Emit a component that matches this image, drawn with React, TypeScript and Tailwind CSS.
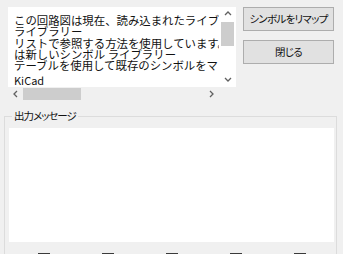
import React from "react";

function Chevron({ dir }: { dir: "up" | "down" | "left" | "right" }) {
  const d =
    dir === "up"
      ? "M1 5 L4 2 L7 5"
      : dir === "down"
      ? "M1 2 L4 5 L7 2"
      : dir === "left"
      ? "M5 1 L2 4 L5 7"
      : "M2 1 L5 4 L2 7";
  return (
    <svg width="8" height="8" viewBox="0 0 8 8" className="block">
      <path d={d} fill="none" stroke="#606060" strokeWidth="1.3" />
    </svg>
  );
}

export default function App() {
  const lines = [
    "この回路図は現在、読み込まれたライブラリー",
    "ライブラリー",
    "リストで参照する方法を使用しています。",
    "は新しいシンボル ライブラリー",
    "テーブルを使用して既存のシンボルをマップ",
  ];
  return (
    <div className="w-[343px] h-[254px] overflow-hidden bg-[#f0f0f0] text-[#111] text-[11px] [font-family:'Noto_Sans_CJK_JP',sans-serif]">
      <div className="flex pt-[7px] pl-[8px]">
        <div className="w-[228px] flex flex-col">
          <div className="h-[80px] bg-white flex">
            <div className="w-[211px] overflow-hidden pl-[6px] pt-[8px] whitespace-nowrap text-[11.4px] leading-[11.3px]">
              {lines.map((l, i) => (
                <div key={i}>{l}</div>
              ))}
              <div className="mt-[4px] text-[11px]">KiCad</div>
            </div>
            <div className="w-[17px] flex flex-col items-center">
              <div className="h-[13px] flex items-center justify-center pt-[1px]">
                <Chevron dir="up" />
              </div>
              <div className="mt-[2px] w-[13px] h-[24px] bg-[#cdcdcd]" />
              <div className="flex-1" />
              <div className="h-[14px] flex items-center justify-center">
                <Chevron dir="down" />
              </div>
            </div>
          </div>
          <div className="h-[13px] flex items-center w-[211px]">
            <div className="w-[15px] flex justify-center">
              <Chevron dir="left" />
            </div>
            <div className="w-[58px] h-[12px] bg-[#cdcdcd]" />
            <div className="flex-1" />
            <div className="w-[15px] flex justify-center">
              <Chevron dir="right" />
            </div>
          </div>
        </div>
        <div className="ml-[7px] flex flex-col gap-[9px]">
          <button className="w-[91px] h-[24px] bg-[#e1e1e1] border border-[#adadad] text-[10.5px] tracking-[-0.7px] [font-feature-settings:'palt'] text-[#111] flex items-center justify-center leading-none">
            シンボルをリマップ
          </button>
          <button className="w-[91px] h-[24px] bg-[#e1e1e1] border border-[#adadad] text-[10.5px] tracking-[-0.7px] [font-feature-settings:'palt'] text-[#111] flex items-center justify-center leading-none">
            閉じる
          </button>
        </div>
      </div>
      <fieldset className="ml-[4px] mt-[8px] w-[333px] border border-[#dcdcdc] pl-[4px] pr-[2px] pb-[4px]">
        <legend className="ml-[3px] px-[2px] text-[10.5px] tracking-[-1px] [font-feature-settings:'palt'] leading-[16px] text-[#111]">出力メッセージ</legend>
        <div className="mt-[4px] h-[114px] bg-white" />
        <div className="mt-[11px] flex gap-[52px] pl-[29px]">
          {[0, 1, 2, 3, 4].map((i) => (
            <div key={i} className="w-[12px] h-[12px] border border-[#3a3a3a] bg-[#5a5a5a]" />
          ))}
        </div>
      </fieldset>
    </div>
  );
}
